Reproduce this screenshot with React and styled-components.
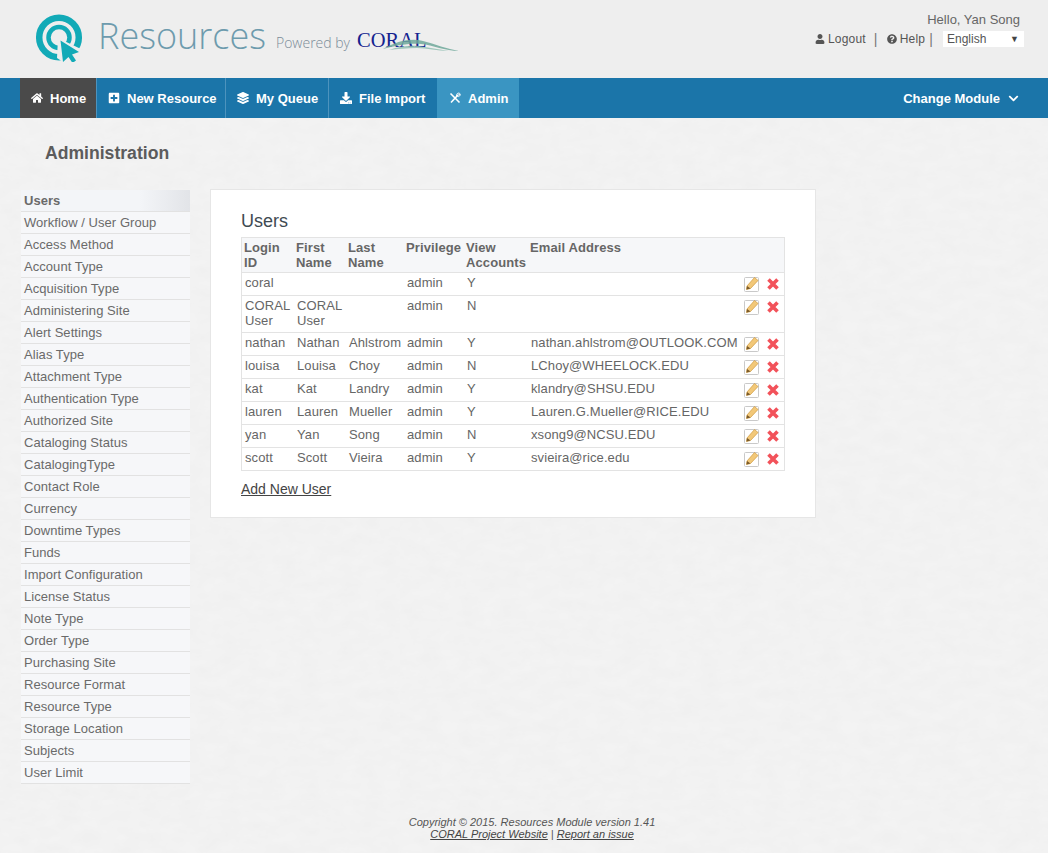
import React from "react";
import styled, { createGlobalStyle } from "styled-components";
import {
  FaHome,
  FaPlusSquare,
  FaLayerGroup,
  FaDownload,
  FaUser,
  FaQuestionCircle,
  FaChevronDown,
} from "react-icons/fa";

const paper =
  "data:image/svg+xml," +
  encodeURIComponent(
    '<svg xmlns="http://www.w3.org/2000/svg" width="400" height="400"><filter id="n"><feTurbulence type="fractalNoise" baseFrequency="0.05 0.09" numOctaves="3" seed="4"/><feColorMatrix values="0 0 0 0 0.5 0 0 0 0 0.5 0 0 0 0 0.5 0.09 0 0 0 -0.02"/></filter><rect width="400" height="400" fill="#f3f3f3"/><rect width="400" height="400" filter="url(#n)"/></svg>'
  );

const GlobalStyle = createGlobalStyle`
  html, body {
    margin: 0;
    padding: 0;
    background: #f2f2f2 url("${paper}");
    font-family: "Liberation Sans", Arial, sans-serif;
    font-size: 14px;
    color: #5a5a5a;
  }
`;

const Page = styled.div`
  width: 1048px;
  height: 853px;
  display: flex;
  flex-direction: column;
  overflow: hidden;
`;

const Header = styled.header`
  height: 78px;
  background: #eeeeee;
  display: flex;
  justify-content: space-between;
  flex-shrink: 0;
`;

const Brand = styled.div`
  display: flex;
  align-items: flex-start;
  padding: 14px 0 0 35px;
`;

const BrandTitle = styled.span`
  font-family: "Open Sans", sans-serif;
  font-weight: 300;
  font-size: 36px;
  line-height: 44px;
  color: #6d9bad;
  margin-left: 15px;
`;

const PoweredBy = styled.span`
  font-family: "Open Sans", sans-serif;
  font-weight: 300;
  font-size: 14px;
  line-height: 20px;
  color: #7b8c98;
  margin: 19px 0 0 10px;
`;

const CoralLogo = styled.div`
  position: relative;
  width: 104px;
  height: 30px;
  margin: 14px 0 0 7px;
`;

const CoralWord = styled.span`
  font-family: "Liberation Serif", serif;
  font-size: 20.5px;
  line-height: 24px;
  color: #14238f;
`;

const CoralWave = styled.svg`
  position: absolute;
  left: 26px;
  top: 10px;
`;

const UserBox = styled.div`
  display: flex;
  flex-direction: column;
  align-items: flex-end;
  padding: 12px 24px 0 0;
`;

const Hello = styled.div`
  font-size: 13px;
  line-height: 16px;
  padding-right: 4px;
  color: #666666;
`;

const UserLinks = styled.div`
  display: flex;
  align-items: center;
  margin-top: 3px;
  font-size: 12px;
  letter-spacing: 0.2px;
  color: #555555;
`;

const UserLink = styled.a`
  display: flex;
  align-items: center;
  gap: 3px;
  color: #555555;
  svg {
    font-size: 10px;
  }
`;

const Pipe = styled.span`
  font-size: 14px;
  color: #777777;
  margin: ${(p) => p.$margin};
`;

const LangSelect = styled.div`
  position: relative;
  width: 81px;
  height: 16px;
  background: #ffffff;
  margin-left: 10px;
  &::after {
    content: "▼";
    position: absolute;
    right: 5px;
    top: 1px;
    font-size: 9px;
    line-height: 14px;
    color: #444444;
  }
  select {
    appearance: none;
    border: 0;
    width: 100%;
    height: 16px;
    padding: 0 0 0 4px;
    background: transparent;
    font-family: inherit;
    font-size: 12px;
    color: #555555;
  }
`;

const NavBar = styled.nav`
  height: 40px;
  background: #1b75a9;
  display: flex;
  justify-content: space-between;
  padding: 0 29px 0 20px;
  flex-shrink: 0;
`;

const NavList = styled.div`
  display: flex;
`;

const NavItem = styled.a`
  display: flex;
  align-items: center;
  gap: 7px;
  width: ${(p) => p.$width}px;
  padding-left: ${(p) => p.$pad}px;
  box-sizing: border-box;
  color: #ffffff;
  font-weight: bold;
  font-size: 13px;
  background: ${(p) =>
    p.$active ? "#4a4a4a" : p.$admin ? "#3a95c2" : "transparent"};
  border-right: ${(p) => (p.$divider ? "1px solid #4d93bd" : "none")};
  svg {
    font-size: 12px;
  }
`;

const ChangeModule = styled.a`
  display: flex;
  align-items: center;
  gap: 8px;
  color: #ffffff;
  font-weight: bold;
  font-size: 13px;
  svg {
    font-size: 11px;
  }
`;

const Main = styled.main`
  flex: 1;
  padding: 0 0 0 21px;
`;

const PageTitle = styled.h1`
  margin: 0;
  padding: 24px 0 0 24px;
  height: 72px;
  box-sizing: border-box;
  font-size: 17.6px;
  line-height: 22px;
  font-weight: bold;
  color: #5c5c5c;
`;

const Columns = styled.div`
  display: flex;
  align-items: flex-start;
  gap: 20px;
`;

const SideList = styled.ul`
  list-style: none;
  margin: 0;
  padding: 0;
  width: 169px;
  flex-shrink: 0;
`;

const SideItem = styled.li`
  height: 22px;
  box-sizing: border-box;
  padding-left: 3px;
  font-size: 13px;
  line-height: 21px;
  letter-spacing: 0.05px;
  background: ${(p) =>
    p.$active ? "linear-gradient(90deg, #f3f5f8 70%, #e2e4e8)" : "#f6f7f9"};
  border-bottom: 1px solid #e2e2e2;
  color: #6a6a6a;
  font-weight: ${(p) => (p.$active ? "bold" : "normal")};
`;

const Card = styled.section`
  width: 606px;
  height: 329px;
  box-sizing: border-box;
  margin-top: -1px;
  padding: 20px 30px 0;
  background: #ffffff;
  border: 1px solid #e6e6e6;
`;

const CardTitle = styled.h2`
  margin: 0;
  font-size: 18px;
  line-height: 22px;
  font-weight: normal;
  color: #3f4a52;
`;

const UserTable = styled.table`
  width: 544px;
  margin-top: 5px;
  table-layout: fixed;
  border-collapse: separate;
  border-spacing: 0;
  font-size: 13px;
  line-height: 15px;
  letter-spacing: 0.1px;
  border: 1px solid #e3e3e3;
  color: #666666;
  tbody tr:last-child td {
    border-bottom: 0;
  }
`;

const HeadCell = styled.th`
  padding: 2px 0 0 2px;
  height: 35px;
  box-sizing: border-box;
  vertical-align: top;
  text-align: left;
  background: #f6f7f9;
  border-bottom: 1px solid #e3e3e3;
  font-weight: bold;
  color: #666666;
`;

const Cell = styled.td`
  padding: 2px 0 4px 3px;
  vertical-align: top;
  border-bottom: 1px solid #e3e3e3;
`;

const ActionCell = styled(Cell)`
  padding: 3px 0 3px 4px;
  white-space: nowrap;
`;

const Actions = styled.div`
  display: flex;
  gap: 7px;
  svg {
    display: block;
  }
`;

const AddLink = styled.a`
  display: block;
  margin-top: 10px;
  font-size: 14px;
  line-height: 16px;
  color: #444444;
  text-decoration: underline;
`;

const Footer = styled.footer`
  height: 37px;
  text-align: center;
  font-size: 11px;
  line-height: 12px;
  font-style: italic;
  color: #555555;
  flex-shrink: 0;
  padding-left: 16px;
  a {
    color: #444444;
    text-decoration: underline;
  }
`;

const Logo = () => (
  <svg width="48" height="48" viewBox="0 0 48 48">
    <circle cx="24" cy="23.5" r="19.8" fill="none" stroke="#12aab7" strokeWidth="6.5" />
    <circle cx="24" cy="23.5" r="10.5" fill="none" stroke="#12aab7" strokeWidth="4.5" />
    <path d="M23 24 L48 36 L38 42 L34 52 L22 44 Z" fill="#eeeeee" />
    <path d="M25.5 26.5 L44 38 L37 40.5 L41 46.5 L37.5 49 L33.5 43 L28 48 Z" fill="#12aab7" />
  </svg>
);

const ToolsIcon = () => (
  <svg width="12" height="12" viewBox="0 0 12 12" fill="none" stroke="#ffffff">
    <path d="M2 10.5 L9 3" strokeWidth="1.6" />
    <path d="M7.5 4 C7 2 9 0.5 10.5 1.2 L9.2 2.6 L9.8 3.3 L11.2 2 C11.6 3.8 9.8 5 8.5 4.5" strokeWidth="0.9" />
    <path d="M1.5 1.5 L10.5 10.5" strokeWidth="1.6" />
  </svg>
);

const PencilIcon = () => (
  <svg width="15" height="16" viewBox="0 0 15 16">
    <rect x="0.5" y="1.5" width="14" height="14" rx="1" fill="#ffffff" stroke="#c9c9c9" />
    <path d="M3 10 L10.5 1.5 L14 4.5 L6.5 12.5 L2.5 13.5 Z" fill="#f2c879" stroke="#d09a3c" strokeWidth="0.7" />
    <path d="M2.5 13.5 L3 10 L6.5 12.5 Z" fill="#7a5a2a" />
  </svg>
);

const DeleteIcon = () => (
  <svg width="14" height="16" viewBox="0 0 14 16">
    <path d="M2.5 3.5 L11.5 12.5 M11.5 3.5 L2.5 12.5" fill="none" stroke="#f2525a" strokeWidth="3.6" />
  </svg>
);

const sideItems = [
  "Users", "Workflow / User Group", "Access Method", "Account Type", "Acquisition Type",
  "Administering Site", "Alert Settings", "Alias Type", "Attachment Type", "Authentication Type",
  "Authorized Site", "Cataloging Status", "CatalogingType", "Contact Role", "Currency",
  "Downtime Types", "Funds", "Import Configuration", "License Status", "Note Type",
  "Order Type", "Purchasing Site", "Resource Format", "Resource Type", "Storage Location",
  "Subjects", "User Limit",
];

const users = [
  ["coral", "", "", "admin", "Y", ""],
  ["CORAL User", "CORAL User", "", "admin", "N", ""],
  ["nathan", "Nathan", "Ahlstrom", "admin", "Y", "nathan.ahlstrom@OUTLOOK.COM"],
  ["louisa", "Louisa", "Choy", "admin", "N", "LChoy@WHEELOCK.EDU"],
  ["kat", "Kat", "Landry", "admin", "Y", "klandry@SHSU.EDU"],
  ["lauren", "Lauren", "Mueller", "admin", "Y", "Lauren.G.Mueller@RICE.EDU"],
  ["yan", "Yan", "Song", "admin", "N", "xsong9@NCSU.EDU"],
  ["scott", "Scott", "Vieira", "admin", "Y", "svieira@rice.edu"],
];

const App = () => {
  return (
    <Page>
      <GlobalStyle />
      <Header>
        <Brand>
          <Logo />
          <BrandTitle>Resources</BrandTitle>
          <PoweredBy>Powered by</PoweredBy>
          <CoralLogo>
            <CoralWord>CORAL</CoralWord>
            <CoralWave width="76" height="14" viewBox="0 0 76 14">
              <path d="M0 11 C14 3 28 0 40 3 C52 6 64 11 76 13 C62 13 50 7 38 6 C24 5 12 8 0 11 Z" fill="#6fa89a" opacity="0.85" />
              <path d="M6 12 C20 7 32 7 42 9 C50 10 58 12 66 13 C54 13 44 10 34 10 C24 10 14 11 6 12 Z" fill="#8bbcae" opacity="0.8" />
            </CoralWave>
          </CoralLogo>
        </Brand>
        <UserBox>
          <Hello>Hello, Yan Song</Hello>
          <UserLinks>
            <UserLink><FaUser />Logout</UserLink>
            <Pipe $margin="0 9px 0 8px">|</Pipe>
            <UserLink><FaQuestionCircle />Help</UserLink>
            <Pipe $margin="0 0 0 4px">|</Pipe>
            <LangSelect>
              <select defaultValue="English">
                <option>English</option>
              </select>
            </LangSelect>
          </UserLinks>
        </UserBox>
      </Header>
      <NavBar>
        <NavList>
          <NavItem $active $divider $width={77} $pad={11}><FaHome />Home</NavItem>
          <NavItem $divider $width={129} $pad={11}><FaPlusSquare />New Resource</NavItem>
          <NavItem $divider $width={103} $pad={11}><FaLayerGroup />My Queue</NavItem>
          <NavItem $width={108} $pad={11}><FaDownload />File Import</NavItem>
          <NavItem $admin $width={82} $pad={12}><ToolsIcon />Admin</NavItem>
        </NavList>
        <ChangeModule>Change Module <FaChevronDown /></ChangeModule>
      </NavBar>
      <Main>
        <PageTitle>Administration</PageTitle>
        <Columns>
          <SideList>
            {sideItems.map((item, index) => (
              <SideItem key={item} $active={index === 0}>{item}</SideItem>
            ))}
          </SideList>
          <Card>
            <CardTitle>Users</CardTitle>
            <UserTable>
              <colgroup>
                <col width="52" />
                <col width="52" />
                <col width="58" />
                <col width="60" />
                <col width="64" />
                <col width="212" />
                <col width="44" />
              </colgroup>
              <thead>
                <tr>
                  <HeadCell>Login ID</HeadCell>
                  <HeadCell>First Name</HeadCell>
                  <HeadCell>Last Name</HeadCell>
                  <HeadCell>Privilege</HeadCell>
                  <HeadCell>View Accounts</HeadCell>
                  <HeadCell>Email Address</HeadCell>
                  <HeadCell />
                </tr>
              </thead>
              <tbody>
                {users.map((user) => (
                  <tr key={user[0]}>
                    {user.map((value, index) => (
                      <Cell key={index}>{value}</Cell>
                    ))}
                    <ActionCell>
                      <Actions>
                        <PencilIcon />
                        <DeleteIcon />
                      </Actions>
                    </ActionCell>
                  </tr>
                ))}
              </tbody>
            </UserTable>
            <AddLink>Add New User</AddLink>
          </Card>
        </Columns>
      </Main>
      <Footer>
        Copyright © 2015. Resources Module version 1.41
        <br />
        <a>CORAL Project Website</a> | <a>Report an issue</a>
      </Footer>
    </Page>
  );
};

export default App;
